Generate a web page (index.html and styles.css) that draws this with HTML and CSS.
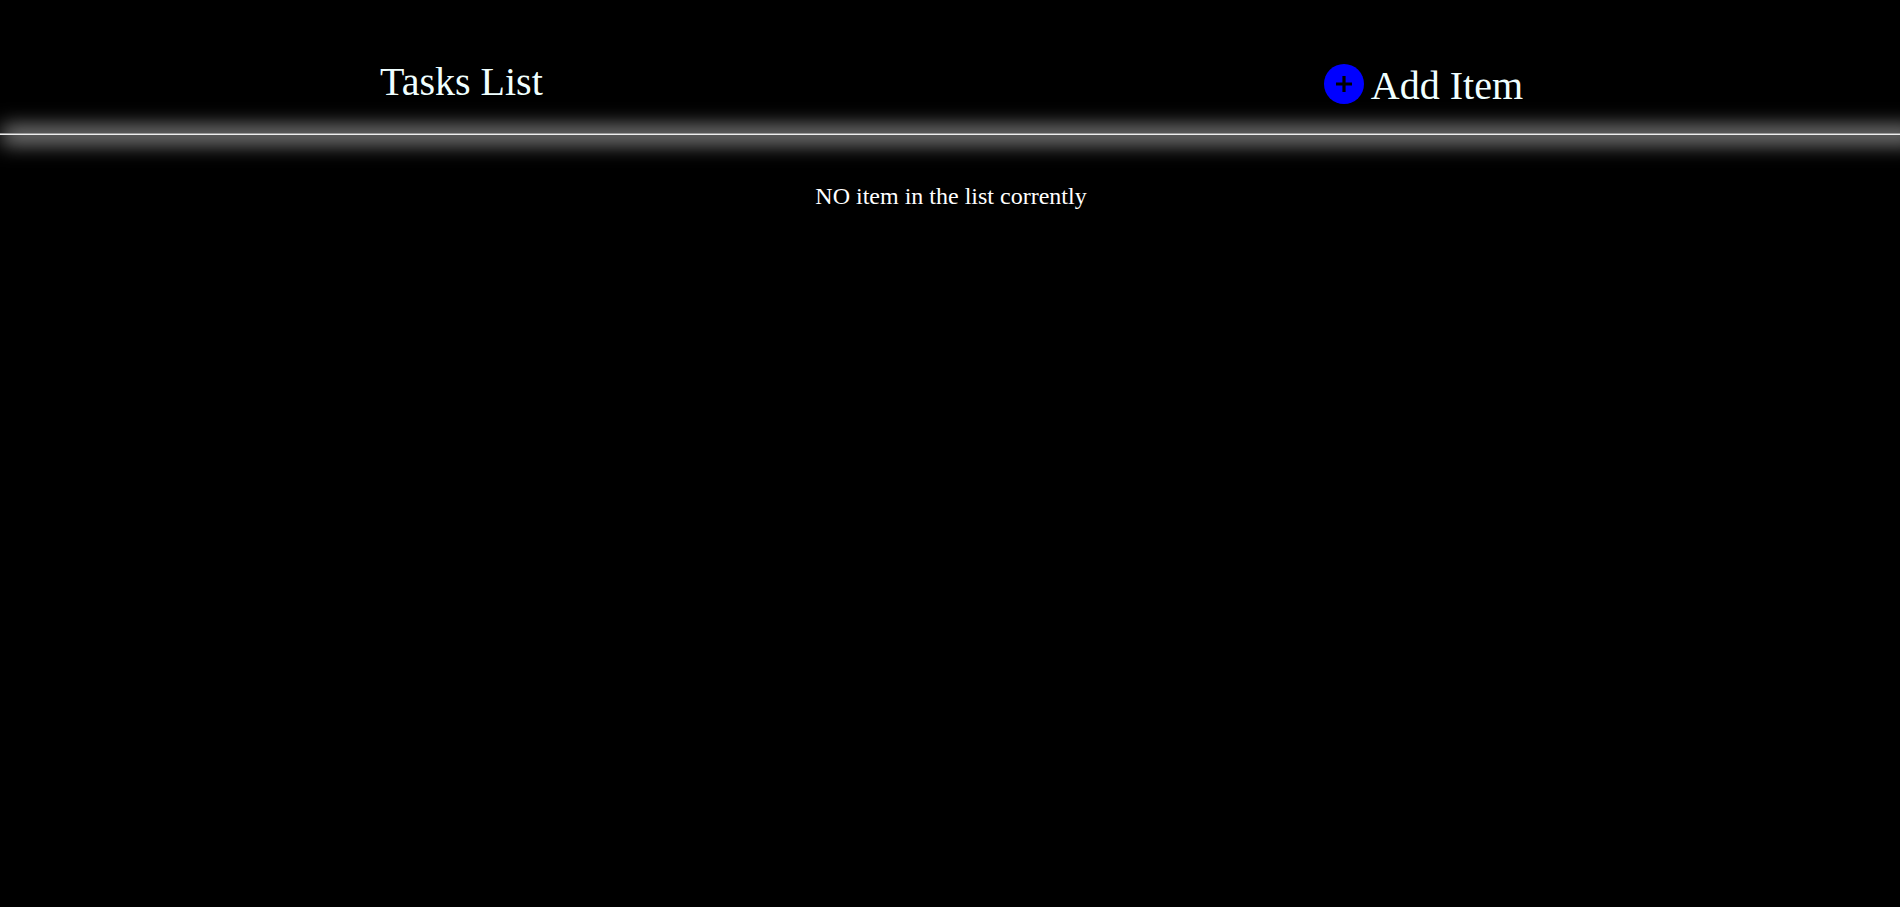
FILE: index.html
```html
<!DOCTYPE html>
<html lang="en">
<head>
<meta charset="utf-8">
<title>Tasks List</title>
<link rel="stylesheet" href="styles.css">
</head>
<body>
<header class="header">
  <div class="title">Tasks List</div>
  <div class="add">
    <svg class="add-icon" viewBox="0 0 40 40" aria-hidden="true">
      <circle cx="20" cy="20" r="20" fill="#00f"/>
      <path d="M20 12v16M12 20h16" stroke="#000" stroke-width="3.2"/>
    </svg>
    <span class="add-label">Add Item</span>
  </div>
</header>
<hr class="divider">
<p class="empty">NO item in the list corrently</p>
</body>
</html>
```

FILE: styles.css
```css
body {
  margin: 0;
  background: #000;
  color: azure;
  font-family: "Liberation Serif", "Times New Roman", serif;
  overflow-x: hidden;
}

.header {
  display: flex;
  justify-content: space-between;
  align-items: flex-start;
  height: 74px;
  padding: 59px 377px 0 380px;
  font-size: 40px;
  line-height: 46px;
}

.add {
  display: flex;
  align-items: flex-start;
  gap: 7px;
}

.add-icon {
  width: 40px;
  height: 40px;
  margin-top: 5px;
}

.add-label {
  margin-top: 4px;
}

.divider {
  height: 1px;
  margin: 0;
  border: 0;
  border-top: 1px solid #9a9a9a;
  background: #eee;
  box-shadow: 10px 1px 20px 8px #888;
}

.empty {
  margin: 47px 0 0 2px;
  color: #fff;
  font-size: 24px;
  line-height: 28px;
  text-align: center;
}
```
